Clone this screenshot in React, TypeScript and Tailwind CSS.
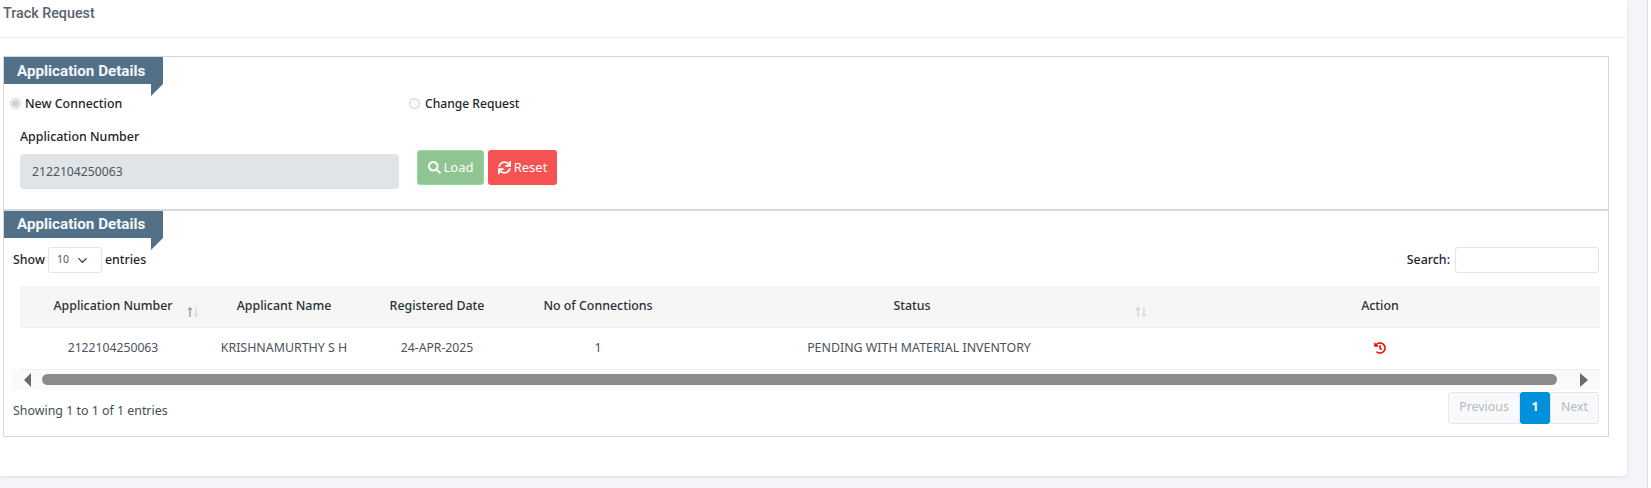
import { ChevronDown } from "lucide-react";
import { FaHistory, FaSearch, FaSync } from "react-icons/fa";

function SectionTab({ low }: { low?: boolean }) {
  return (
    <div className="relative h-[27px] w-[159px] bg-[#527189] pl-[13px] font-['Roboto',sans-serif] text-[15.2px] font-bold text-[#f4f7f9]">
      <span className={low ? "block leading-[28px]" : "block leading-[26px]"}>Application Details</span>
      <svg className="absolute top-[27px] right-0" width="12" height="12" viewBox="0 0 12 12">
        <polygon points="0,0 12,0 0,12" fill="#527189" />
      </svg>
    </div>
  );
}

function SortIcon({ className, dark }: { className: string; dark?: boolean }) {
  return (
    <svg className={className} width="12" height="12" viewBox="0 0 12 12">
      <path d="M3 11V2M1.2 3.8 3 1.5l1.8 2.3" stroke={dark ? "#6f7780" : "#c4c4c4"} strokeWidth="1" fill="none" />
      <path d="M9 1v9M7.2 8.2 9 10.5l1.8-2.3" stroke="#cfcfcf" strokeWidth="1" fill="none" />
    </svg>
  );
}

export default function App() {
  return (
    <div className="flex h-[488px] overflow-hidden bg-[#f4f5f9] font-['Noto_Sans',sans-serif] text-[12.4px] text-[#343a40]">
      <main className="h-[476px] w-[1627px] shrink-0 rounded-br-[4px] bg-white shadow-[0_1px_3px_rgba(60,70,110,0.12)]">
        <header className="h-[38px] border-b border-[#eeeff2] pl-[3px] font-['Roboto',sans-serif] text-[14.3px] leading-[26px] font-medium text-[#5a6470]">
          Track Request
        </header>

        <div className="mt-[18px] ml-[3px] w-[1606px] border border-[#d6d6d6]">
          <section className="h-[154px] border-b-2 border-[#d9d9d9]">
            <SectionTab low />
            <div className="mt-[10px] flex h-[20px] items-center font-medium text-[#1f252b]">
              <label className="flex w-[405px] items-center gap-[4px] pl-[6px]">
                <input type="radio" name="kind" disabled defaultChecked className="m-0 size-[11px]" />
                New Connection
              </label>
              <label className="flex items-center gap-[5px]">
                <input type="radio" name="kind" disabled className="m-0 size-[11px]" />
                <span className="text-[12.1px]">Change Request</span>
              </label>
            </div>
            <div className="mt-[13px] flex pl-[16px]">
              <div>
                <div className="leading-[20px] font-medium text-[#1f252b]">Application Number</div>
                <input
                  readOnly
                  value="2122104250063"
                  className="mt-[7px] h-[35px] w-[379px] rounded-[4px] bg-[#e1e4e7] px-[12px] text-[12.2px] text-[#4d5560] outline-none"
                />
              </div>
              <div className="mt-[23px] flex h-[35px] gap-[4px] text-white">
                <button className="ml-[18px] flex w-[67px] items-center justify-center gap-[3px] rounded-[3px] border border-[#8fdca5] bg-[#8fc590] text-[13px]">
                  <FaSearch className="size-[13px]" />
                  Load
                </button>
                <button className="flex w-[69px] items-center justify-center gap-[3px] rounded-[3px] bg-[#f55252] text-[13px]">
                  <FaSync className="size-[13px]" />
                  Reset
                </button>
              </div>
            </div>
          </section>

          <section className="h-[225px]">
            <SectionTab />
            <div className="mt-[9px] flex h-[26px] items-center justify-between pr-[9px] pl-[9px] font-medium text-[#1f252b]">
              <div className="flex items-center">
                Show
                <span className="mx-[3px] flex h-[26px] w-[54px] items-center gap-[6px] rounded-[3px] border border-[#e3e5e8] pl-[8px] text-[10.5px] font-normal text-[#555]">
                  10
                  <ChevronDown className="size-[15px] text-[#333]" strokeWidth={2} />
                </span>
                entries
              </div>
              <div className="flex items-center gap-[5px]">
                Search:
                <input className="h-[26px] w-[144px] rounded-[3px] border border-[#e3e5e8]" />
              </div>
            </div>

            <div className="mt-[13px] ml-[16px] w-[1580px]">
              <table className="w-full table-fixed border-collapse text-center">
                <colgroup>
                  <col className="w-[186px]" />
                  <col className="w-[156px]" />
                  <col className="w-[150px]" />
                  <col className="w-[172px]" />
                  <col className="w-[476px]" />
                  <col className="w-[440px]" />
                </colgroup>
                <thead>
                  <tr className="h-[41px] border-b border-[#eceeef] bg-[#f6f6f6] font-medium text-[#2a3138]">
                    <th className="relative font-medium">
                      Application Number
                      <SortIcon dark className="absolute top-[20px] right-[7px]" />
                    </th>
                    <th className="font-medium">Applicant Name</th>
                    <th className="font-medium">Registered Date</th>
                    <th className="font-medium">No of Connections</th>
                    <th className="relative pr-[20px] font-medium">
                      Status
                      <SortIcon className="absolute top-[20px] right-[13px]" />
                    </th>
                    <th className="font-medium">Action</th>
                  </tr>
                </thead>
                <tbody>
                  <tr className="h-[42px] border-b border-[#eceeef] text-[#4a525c]">
                    <td className="text-[12.2px]">2122104250063</td>
                    <td>KRISHNAMURTHY S H</td>
                    <td className="text-[12.2px]">24-APR-2025</td>
                    <td>1</td>
                    <td className="pr-[6px]">PENDING WITH MATERIAL INVENTORY</td>
                    <td>
                      <FaHistory className="mx-auto size-[12px] text-[#ff0000]" />
                    </td>
                  </tr>
                </tbody>
              </table>
            </div>

            <div className="ml-[8px] flex h-[20px] w-[1588px] items-center bg-[#fafafa]">
              <svg className="ml-[12px]" width="8" height="14" viewBox="0 0 8 14">
                <polygon points="7,0 7,14 0,7" fill="#6b6b6b" />
              </svg>
              <div className="ml-[10px] h-[11px] w-[1515px] rounded-full bg-[#8b8b8b]" />
              <svg className="ml-[23px]" width="8" height="14" viewBox="0 0 8 14">
                <polygon points="0,0 0,14 8,7" fill="#6b6b6b" />
              </svg>
            </div>

            <div className="flex items-start justify-between pr-[9px] pl-[9px]">
              <div className="mt-[12px] text-[#454d56]">Showing 1 to 1 of 1 entries</div>
              <div className="mt-[2px] flex h-[32px]">
                <span className="flex w-[72px] items-center justify-center rounded-l-[3px] border border-[#e3e6ea] bg-[#f8f9fa] text-[#b5bac0]">
                  Previous
                </span>
                <span className="flex w-[30px] items-center justify-center rounded-[3px] bg-[#0090dc] font-bold text-white">
                  1
                </span>
                <span className="flex w-[49px] items-center justify-center rounded-r-[3px] border border-[#e3e6ea] bg-[#f8f9fa] text-[#b5bac0]">
                  Next
                </span>
              </div>
            </div>
          </section>
        </div>
      </main>
      <div className="ml-auto w-[4px] border-l border-[#dcdde0] bg-white" />
    </div>
  );
}
